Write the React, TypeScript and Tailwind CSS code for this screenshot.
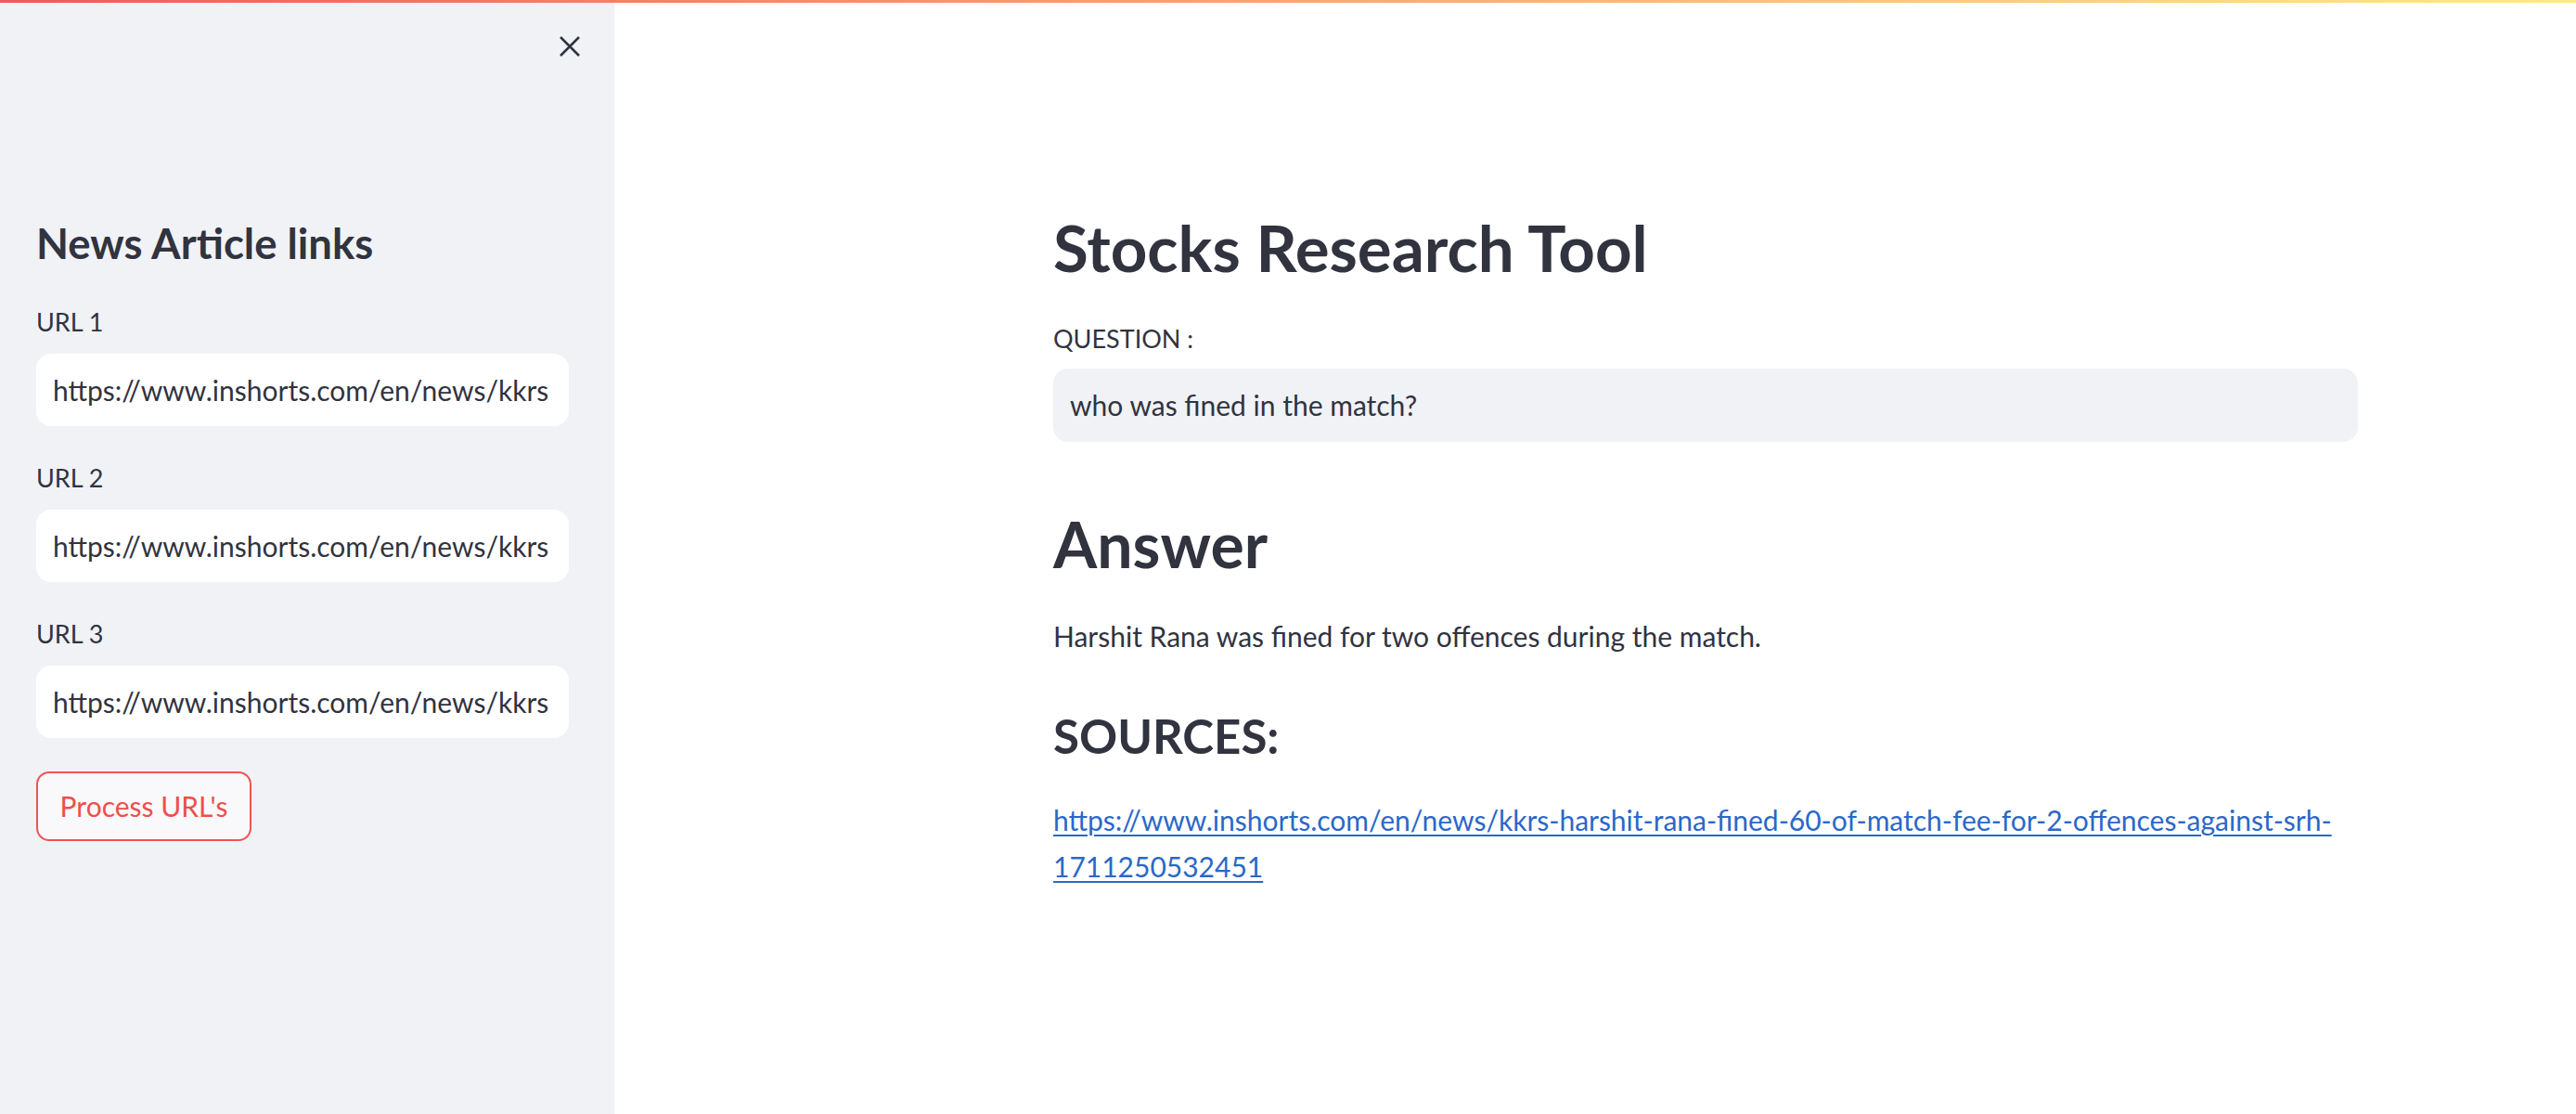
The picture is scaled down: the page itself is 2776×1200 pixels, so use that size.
// Streamlit-style research page: sidebar with URL inputs + main Q&A column
const URL_VALUE = 'https://www.inshorts.com/en/news/kkrs';

function UrlField({ label }: { label: string }) {
  return (
    <div className="flex flex-col">
      <div className="h-[34px] flex items-center text-[27px] text-[#31333f]">{label}</div>
      <div className="mt-[17px] h-[78px] w-[574px] bg-white rounded-[16px] flex items-center px-[18px] overflow-hidden">
        <span className="text-[30px] text-[#31333f] whitespace-nowrap">{URL_VALUE}</span>
      </div>
    </div>
  );
}

export default function App() {
  return (
    <div className="h-[1200px] w-full flex flex-col bg-white" style={{ fontFamily: 'Lato, "Noto Sans", sans-serif' }}>
      {/* decoration bar */}
      <div className="h-[3px] w-full bg-gradient-to-r from-[#ee5b58] to-[#fde98a]" />

      <div className="flex flex-1">
        {/* Sidebar */}
        <aside className="w-[662px] shrink-0 bg-[#f0f2f6] pl-[39px]">
          <div className="flex justify-end pr-[37px] mt-[36px]">
            <svg width="22" height="22" viewBox="0 0 22 22" className="text-[#31333f]">
              <path d="M1 1 L21 21 M21 1 L1 21" stroke="currentColor" strokeWidth="2.5" fill="none" />
            </svg>
          </div>

          <h2 className="mt-[171px] h-[60px] flex items-center text-[45.5px] font-bold text-[#31333f]">
            News Article links
          </h2>

          <div className="mt-[38px] flex flex-col gap-[39px]">
            <UrlField label="URL 1" />
            <UrlField label="URL 2" />
            <UrlField label="URL 3" />
          </div>

          <button className="mt-[36px] h-[75px] w-[232px] rounded-[14px] border-2 border-[#ef5552] bg-[#f9f9fb] text-[30px] text-[#ee4f4b] flex items-center justify-center">
            Process URL's
          </button>
        </aside>

        {/* Main */}
        <main className="flex-1 pl-[473px] pt-[214px]">
          <div className="w-[1406px] flex flex-col">
            <h1 className="h-[100px] flex items-center text-[69px] font-bold text-[#31333f]">
              Stocks Research Tool
            </h1>

            <div className="mt-[31px] h-[34px] flex items-center text-[27px] text-[#31333f]">QUESTION :</div>
            <div className="mt-[15px] h-[79px] rounded-[16px] bg-[#f0f2f6] flex items-center px-[18px]">
              <span className="text-[30px] text-[#31333f]">who was fined in the match?</span>
            </div>

            <h2 className="mt-[60px] h-[100px] flex items-center text-[68px] font-bold text-[#31333f]">Answer</h2>

            <p className="mt-[24px] h-[50px] flex items-center text-[30px] text-[#31333f]">
              Harshit Rana was fined for two offences during the match.
            </p>

            <h3 className="mt-[48px] h-[70px] flex items-center text-[51px] font-bold text-[#31333f]">SOURCES:</h3>

            <p className="mt-[30px] text-[30px] leading-[50px]">
              <a href="#" className="text-[#2a68c9] underline underline-offset-[4px] decoration-2">
                https://www.inshorts.com/en/news/kkrs-harshit-rana-fined-60-of-match-fee-for-2-offences-against-srh-
                <br />
                1711250532451
              </a>
            </p>
          </div>
        </main>
      </div>
    </div>
  );
}
